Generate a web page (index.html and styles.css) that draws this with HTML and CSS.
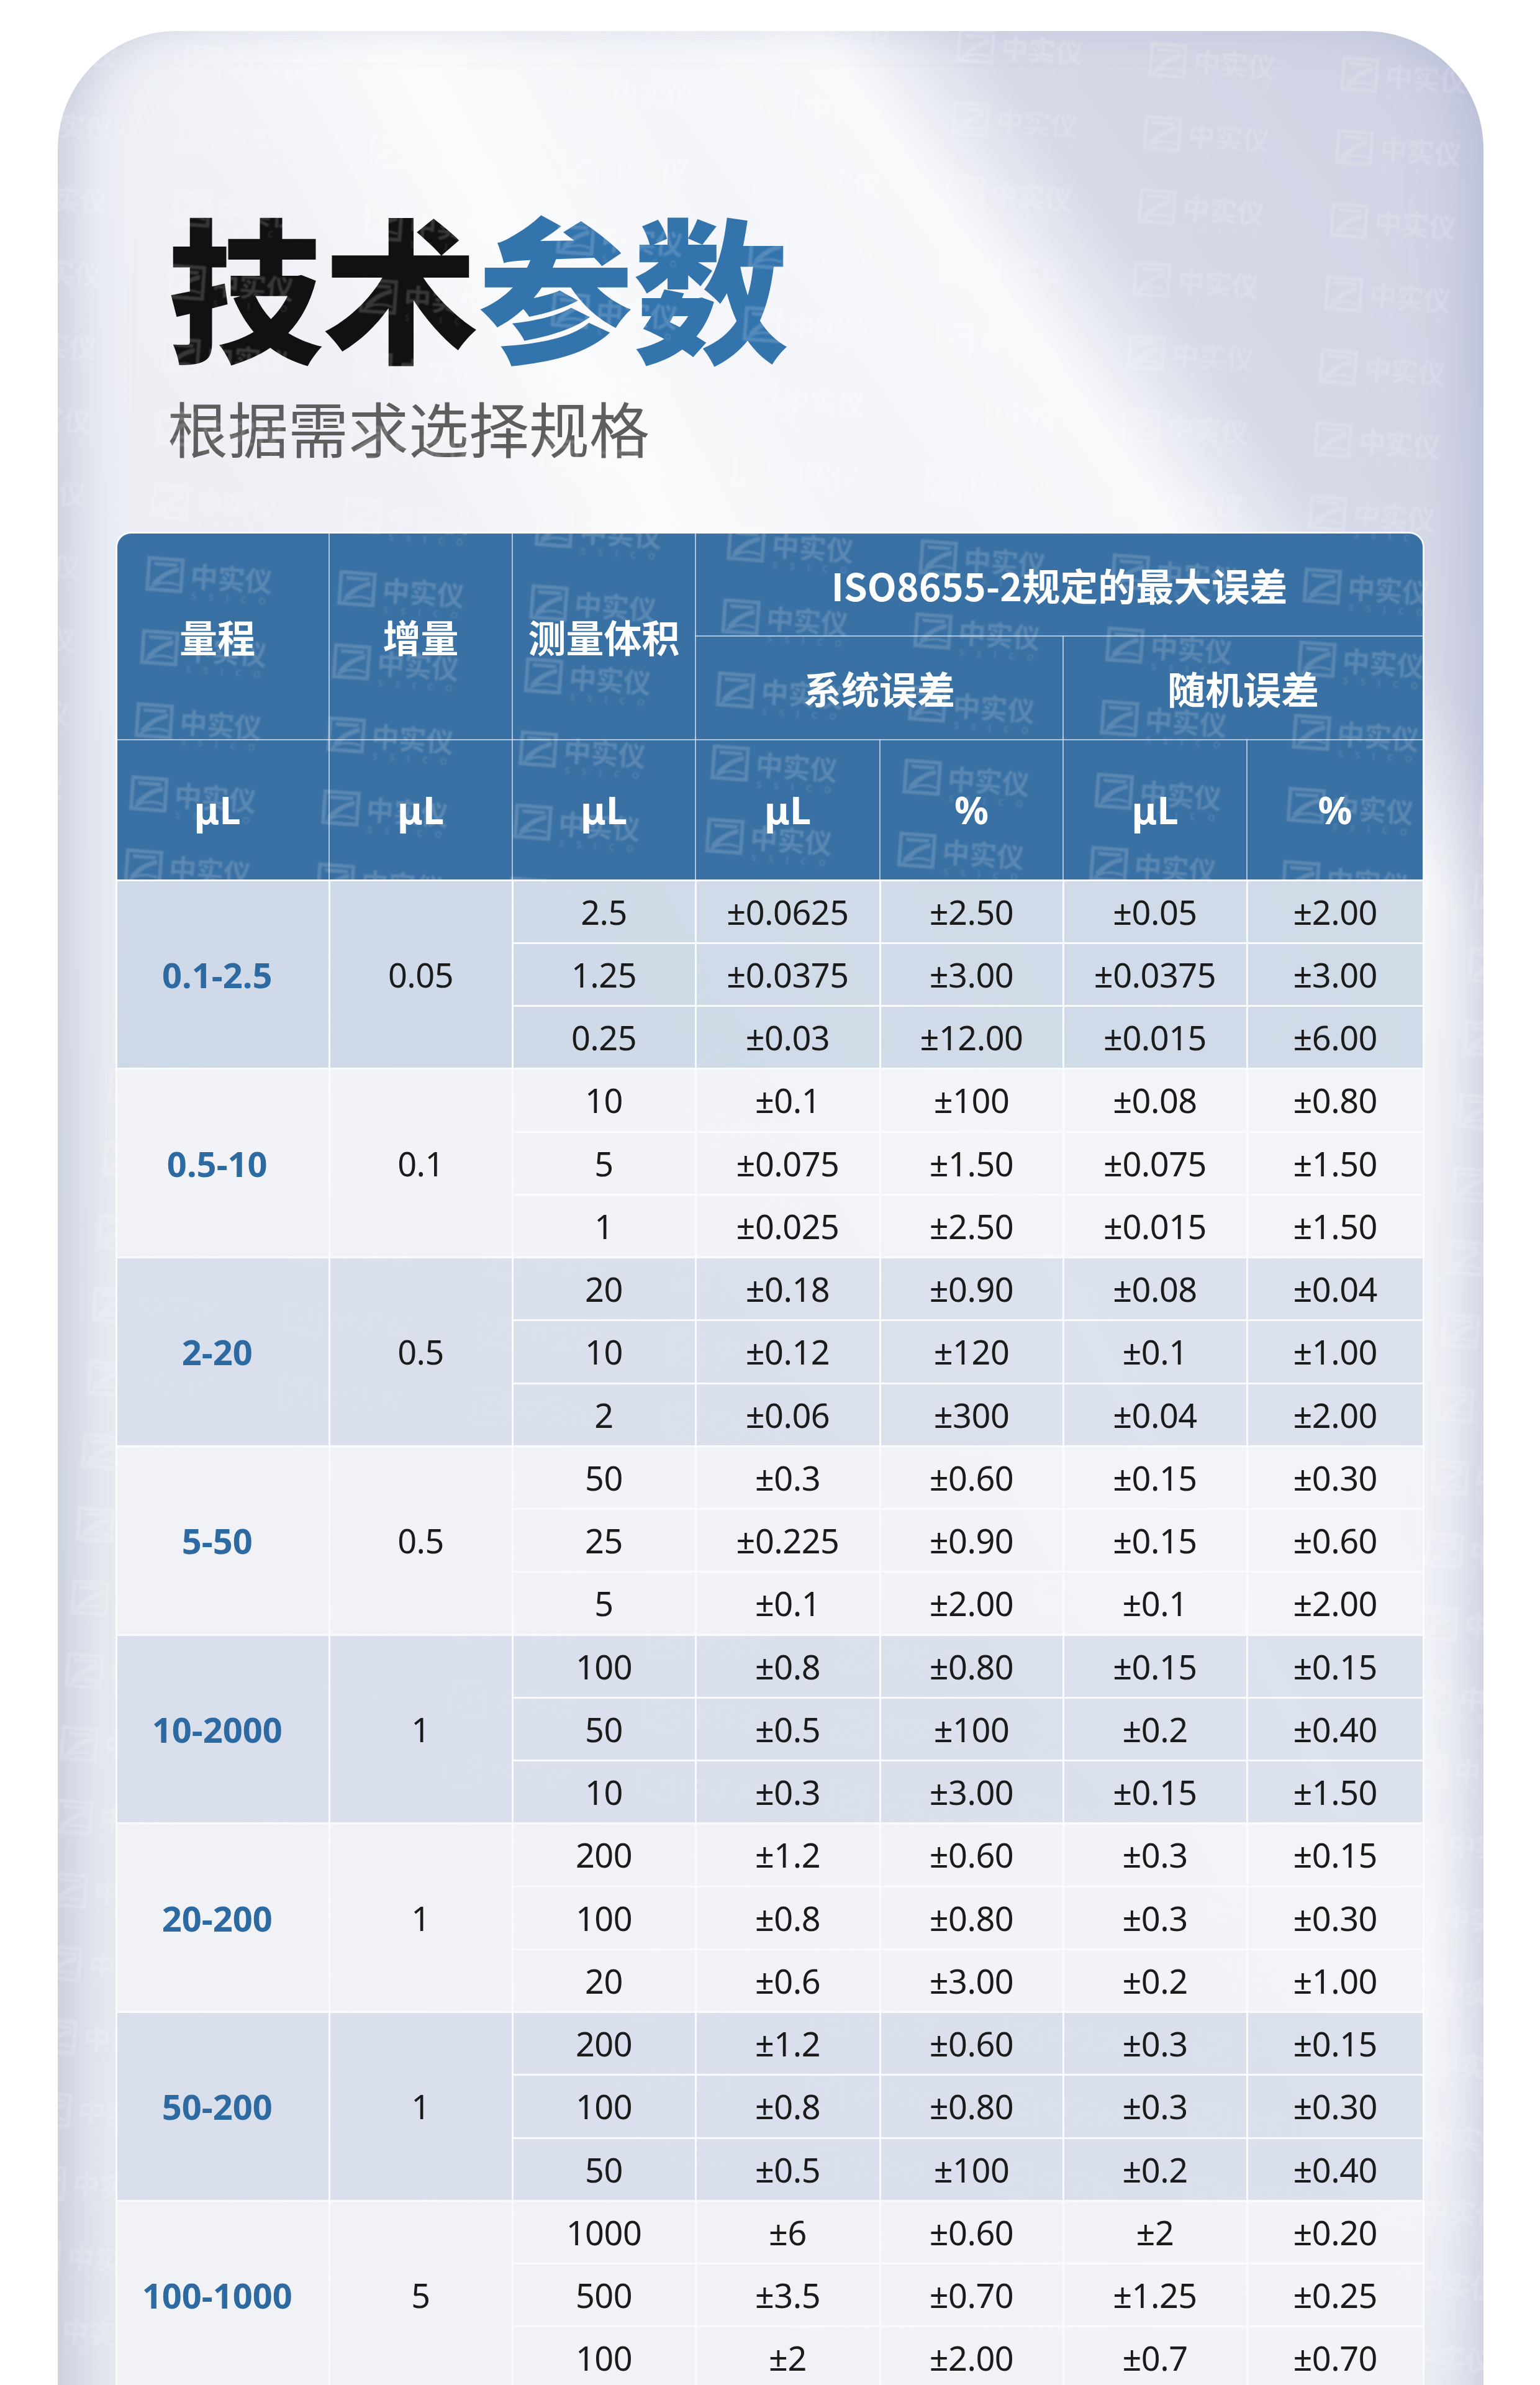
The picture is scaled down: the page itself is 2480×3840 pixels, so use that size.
FILE: index.html
```html
<!DOCTYPE html>
<html lang="zh-CN">
<head>
<meta charset="utf-8">
<title>技术参数</title>
<link rel="stylesheet" href="styles.css">
</head>
<body>
<div class="page">
  <section class="card">
    <header class="heading">
      <h1 class="title">技术<span class="accent">参数</span></h1>
      <p class="subtitle">根据需求选择规格</p>
    </header>

    <div class="spec-wrap">
      <table class="spec">
        <colgroup>
          <col class="c1"><col class="c2"><col class="c3"><col class="c4"><col class="c5"><col class="c6"><col class="c7">
        </colgroup>
        <thead>
          <tr class="h1">
            <th rowspan="2" class="first">量程</th>
            <th rowspan="2">增量</th>
            <th rowspan="2">测量体积</th>
            <th colspan="4">ISO8655-2规定的最大误差</th>
          </tr>
          <tr class="h2">
            <th colspan="2">系统误差</th>
            <th colspan="2">随机误差</th>
          </tr>
          <tr class="h3">
            <th class="first">μL</th><th>μL</th><th>μL</th><th>μL</th><th>%</th><th>μL</th><th>%</th>
          </tr>
        </thead>
        <tbody class="g g1">
          <tr><td rowspan="3" class="range">0.1-2.5</td><td rowspan="3">0.05</td><td>2.5</td><td>±0.0625</td><td>±2.50</td><td>±0.05</td><td>±2.00</td></tr>
          <tr><td>1.25</td><td>±0.0375</td><td>±3.00</td><td>±0.0375</td><td>±3.00</td></tr>
          <tr><td>0.25</td><td>±0.03</td><td>±12.00</td><td>±0.015</td><td>±6.00</td></tr>
        </tbody>
        <tbody class="g even">
          <tr><td rowspan="3" class="range">0.5-10</td><td rowspan="3">0.1</td><td>10</td><td>±0.1</td><td>±100</td><td>±0.08</td><td>±0.80</td></tr>
          <tr><td>5</td><td>±0.075</td><td>±1.50</td><td>±0.075</td><td>±1.50</td></tr>
          <tr><td>1</td><td>±0.025</td><td>±2.50</td><td>±0.015</td><td>±1.50</td></tr>
        </tbody>
        <tbody class="g odd">
          <tr><td rowspan="3" class="range">2-20</td><td rowspan="3">0.5</td><td>20</td><td>±0.18</td><td>±0.90</td><td>±0.08</td><td>±0.04</td></tr>
          <tr><td>10</td><td>±0.12</td><td>±120</td><td>±0.1</td><td>±1.00</td></tr>
          <tr><td>2</td><td>±0.06</td><td>±300</td><td>±0.04</td><td>±2.00</td></tr>
        </tbody>
        <tbody class="g even">
          <tr><td rowspan="3" class="range">5-50</td><td rowspan="3">0.5</td><td>50</td><td>±0.3</td><td>±0.60</td><td>±0.15</td><td>±0.30</td></tr>
          <tr><td>25</td><td>±0.225</td><td>±0.90</td><td>±0.15</td><td>±0.60</td></tr>
          <tr><td>5</td><td>±0.1</td><td>±2.00</td><td>±0.1</td><td>±2.00</td></tr>
        </tbody>
        <tbody class="g odd">
          <tr><td rowspan="3" class="range">10-2000</td><td rowspan="3">1</td><td>100</td><td>±0.8</td><td>±0.80</td><td>±0.15</td><td>±0.15</td></tr>
          <tr><td>50</td><td>±0.5</td><td>±100</td><td>±0.2</td><td>±0.40</td></tr>
          <tr><td>10</td><td>±0.3</td><td>±3.00</td><td>±0.15</td><td>±1.50</td></tr>
        </tbody>
        <tbody class="g even">
          <tr><td rowspan="3" class="range">20-200</td><td rowspan="3">1</td><td>200</td><td>±1.2</td><td>±0.60</td><td>±0.3</td><td>±0.15</td></tr>
          <tr><td>100</td><td>±0.8</td><td>±0.80</td><td>±0.3</td><td>±0.30</td></tr>
          <tr><td>20</td><td>±0.6</td><td>±3.00</td><td>±0.2</td><td>±1.00</td></tr>
        </tbody>
        <tbody class="g odd">
          <tr><td rowspan="3" class="range">50-200</td><td rowspan="3">1</td><td>200</td><td>±1.2</td><td>±0.60</td><td>±0.3</td><td>±0.15</td></tr>
          <tr><td>100</td><td>±0.8</td><td>±0.80</td><td>±0.3</td><td>±0.30</td></tr>
          <tr><td>50</td><td>±0.5</td><td>±100</td><td>±0.2</td><td>±0.40</td></tr>
        </tbody>
        <tbody class="g even">
          <tr><td rowspan="3" class="range">100-1000</td><td rowspan="3">5</td><td>1000</td><td>±6</td><td>±0.60</td><td>±2</td><td>±0.20</td></tr>
          <tr><td>500</td><td>±3.5</td><td>±0.70</td><td>±1.25</td><td>±0.25</td></tr>
          <tr><td>100</td><td>±2</td><td>±2.00</td><td>±0.7</td><td>±0.70</td></tr>
        </tbody>
      </table>
    </div>

    <div class="wm-layer" aria-hidden="true"></div>
  </section>
</div>

<template id="wm-tpl">
  <div class="wm">
    <svg class="wm-logo" viewBox="0 0 64 60" width="62" height="58">
      <path d="M4 4 H60 V56 H4 Z" fill="none" stroke="#fff" stroke-width="6"/>
      <path d="M12 10 H52 L50 16 H14 Z" fill="#fff"/>
      <path d="M10 46 Q26 24 54 16 L54 24 Q32 30 18 50 Z" fill="#fff"/>
      <path d="M10 52 Q32 38 56 46" fill="none" stroke="#fff" stroke-width="4"/>
    </svg>
    <div class="wm-text">
      <span class="wm-cn">中实仪</span>
      <span class="wm-en">SSICO</span>
    </div>
  </div>
</template>
<script src="script.js"></script>
</body>
</html>
```

FILE: styles.css
```css
html, body {
  margin: 0;
  padding: 0;
}

body {
  width: 2480px;
  height: 3840px;
  overflow: hidden;
  background: #ffffff;
  font-family: "Noto Sans", "Noto Sans CJK SC", sans-serif;
}

.page {
  padding: 50px 91px 0 93px;
}

.card {
  position: relative;
  overflow: hidden;
  box-sizing: border-box;
  height: 3900px;
  border-radius: 190px 190px 0 0;
  padding: 281px 98px 0 96px;
  background:
    linear-gradient(62deg, rgba(255,255,255,0) 52%, rgba(255,255,255,0.65) 60%, rgba(255,255,255,0) 68%),
    linear-gradient(54deg, #e6e9f0 0%, #eceef4 45%, #f5f6f9 74%, #f8f9fb 79%, #d6d9e7 84%, #cdd1e2 100%);
  box-shadow:
    inset 70px 0 90px -50px rgba(165, 174, 202, 0.6),
    inset -70px 0 90px -50px rgba(165, 174, 202, 0.6);
}

.heading {
  padding-left: 81px;
}

.title {
  margin: 0;
  font-family: "Noto Sans CJK SC", sans-serif;
  font-weight: 900;
  font-size: 250px;
  line-height: 250px;
  color: #111111;
}

.title .accent {
  color: #3474ad;
}

.subtitle {
  margin: 58px 0 0;
  font-family: "Noto Sans CJK SC", sans-serif;
  font-weight: 400;
  font-size: 97px;
  line-height: 96px;
  color: #5e5e5e;
}

.spec-wrap {
  margin-top: 124px;
  width: 2102px;
  border-radius: 22px 22px 0 0;
  overflow: hidden;
  box-shadow: 0 0 0 3px rgba(255, 255, 255, 0.75);
}

.spec {
  width: 2102px;
  table-layout: fixed;
  border-collapse: collapse;
}

.c1 { width: 341px; }
.c2 { width: 295px; }
.c3 { width: 295px; }
.c4 { width: 297px; }
.c5 { width: 295px; }
.c6 { width: 296px; }
.c7 { width: 283px; }

.spec th {
  padding: 0;
  background: #3a71a4;
  color: #ffffff;
  font-family: "Noto Sans CJK SC", sans-serif;
  font-weight: 700;
  font-size: 61px;
  border: 2px solid rgba(214, 226, 240, 0.75);
  border-top: none;
}

.spec th.first {
  padding-right: 18px;
}

.spec tr.h1 { height: 165px; }
.spec tr.h2 { height: 167px; }
.spec tr.h3 { height: 226px; }

.spec tr.h3 th {
  font-family: "Noto Sans", "Noto Sans CJK SC", sans-serif;
  border-bottom: 3px solid #f4f6fa;
}

.spec th:first-child { border-left: none; }
.spec tr.h1 th:last-child,
.spec tr.h2 th:last-child,
.spec tr.h3 th:last-child { border-right: none; }

.spec td {
  position: relative;
  z-index: 6;
  padding: 0;
  height: 98.25px;
  text-align: center;
  font-family: "Noto Sans", sans-serif;
  font-size: 54px;
  letter-spacing: -0.5px;
  color: #1b1b1b;
  border: 3px solid rgba(250, 251, 253, 0.95);
}

.spec tr td:last-child { border-right: none; }
.spec tbody tr:first-child td:first-child { border-left: none; }

.spec td.range {
  padding-right: 18px;
  font-weight: 700;
  font-size: 56px;
  letter-spacing: 0;
  color: #2d6aa1;
}

.g1 td { background: rgba(200, 212, 228, 0.82); }
.odd td { background: rgba(212, 220, 234, 0.8); }
.even td { background: rgba(242, 243, 247, 0.85); }

/* watermark overlay */
.wm-layer {
  position: absolute;
  left: 144px;
  top: 844px;
  width: 4030px;
  display: grid;
  grid-template-columns: repeat(13, 310px);
  grid-auto-rows: 118px;
  transform-origin: 0 0;
  transform: rotate(4.2deg) translate(-1240px, -1180px);
  opacity: 0.16;
  filter: blur(0.8px);
  pointer-events: none;
  z-index: 5;
}

.wm {
  display: flex;
  align-items: flex-start;
  gap: 10px;
  color: #ffffff;
}

.wm-logo {
  flex: none;
}

.wm-text {
  display: flex;
  flex-direction: column;
  align-items: flex-start;
}

.wm-cn {
  font-family: "Noto Sans CJK SC", sans-serif;
  font-weight: 700;
  font-size: 44px;
  line-height: 52px;
}

.wm-en {
  font-family: "Noto Sans", sans-serif;
  font-size: 14px;
  line-height: 16px;
  letter-spacing: 20px;
  padding-left: 4px;
}
```

FILE: script.js
```js
(function () {
  var layer = document.querySelector('.wm-layer');
  var tpl = document.getElementById('wm-tpl');
  if (!layer || !tpl) return;
  for (var i = 0; i < 13 * 42; i++) {
    layer.appendChild(tpl.content.cloneNode(true));
  }
})();
```
